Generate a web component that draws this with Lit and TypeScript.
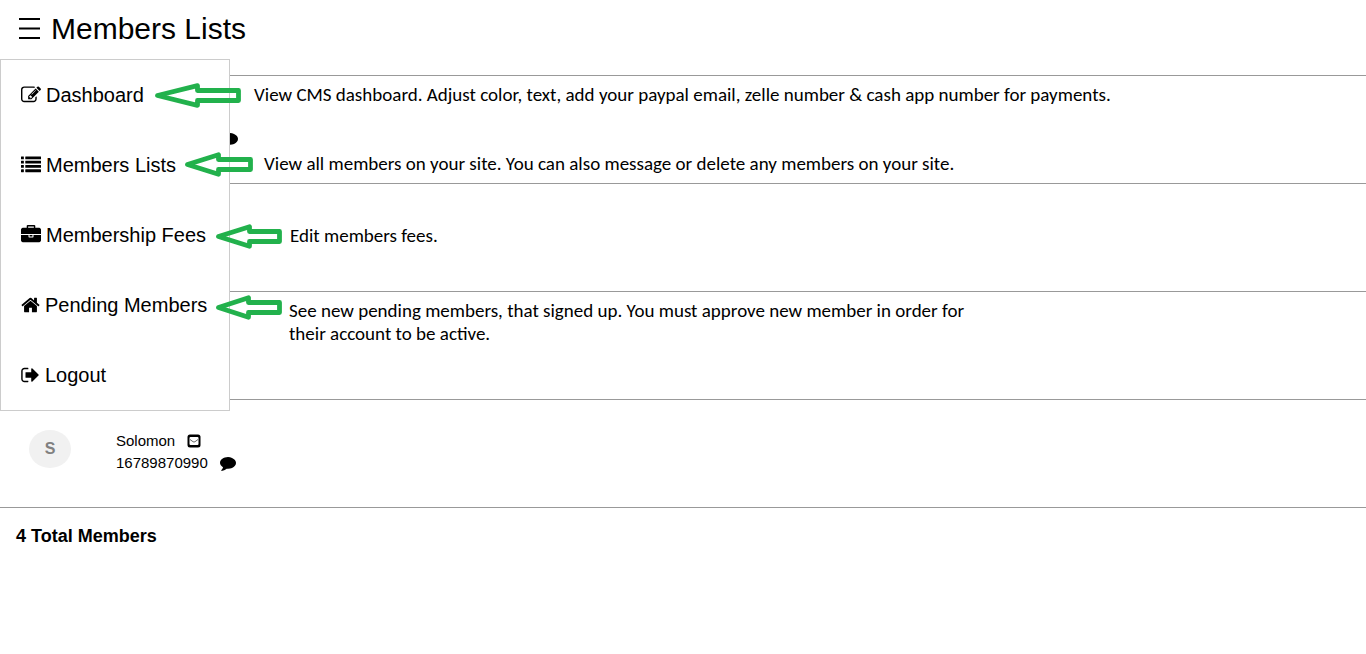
import { LitElement, html, css, svg, nothing } from "lit";
import { customElement, property } from "lit/decorators.js";

const listRows = [128, 512, 896, 1280];

const icons = {
  edit: {
    box: "0 0 1792 1792",
    width: 20,
    art: svg`<path d="M888 1184l116-116-152-152-116 116v56h96v96h56zm440-720q-16-16-33 1l-350 350q-17 17-1 33t33-1l350-350q17-17 1-33zm80 594v190q0 119-84.5 203.5t-203.5 84.5h-832q-119 0-203.5-84.5t-84.5-203.5v-832q0-119 84.5-203.5t203.5-84.5h832q63 0 117 25 15 7 18 23 3 17-9 29l-49 49q-14 14-32 8-23-6-45-6h-832q-66 0-113 47t-47 113v832q0 66 47 113t113 47h832q66 0 113-47t47-113v-126q0-13 9-22l64-64q15-15 35-7t20 29zm-96-738l288 288-672 672h-288v-288zm444 132l-92 92-288-288 92-92q28-28 68-28t68 28l152 152q28 28 28 68t-28 68z"/>`,
  },
  list: {
    box: "0 0 1792 1792",
    width: 20,
    art: listRows.map(
      (y) => svg`<rect x="0" y=${y} width="256" height="256" rx="32"/><rect x="384" y=${y} width="1408" height="256" rx="32"/>`
    ),
  },
  briefcase: {
    box: "0 0 1792 1792",
    width: 20,
    art: svg`<path d="M640 256h512v-128h-512v128zm1152 640v480q0 66-47 113t-113 47h-1472q-66 0-113-47t-47-113v-480h672v160q0 26 19 45t45 19h320q26 0 45-19t19-45v-160h672zm-768 0v128h-256v-128h256zm768-480v384h-1792v-384q0-66 47-113t113-47h352v-160q0-40 28-68t68-28h576q40 0 68 28t28 68v160h352q66 0 113 47t47 113z"/>`,
  },
  home: {
    box: "64 0 1664 1792",
    width: 19,
    art: svg`<path d="M1472 992v480q0 26-19 45t-45 19h-384v-384h-256v384h-384q-26 0-45-19t-19-45v-480q0-1 .5-3t.5-3l575-474 575 474q1 2 1 6zm223-69l-62 74q-8 9-21 11h-3q-13 0-21-7l-692-577-692 577q-12 8-24 7-13-2-21-11l-62-74q-8-10-7-23.5t11-21.5l719-599q32-26 76-26t76 26l244 204v-195q0-14 9-23t23-9h192q14 0 23 9t9 23v408l219 182q10 8 11 21.5t-7 23.5z"/>`,
  },
  logout: {
    box: "64 0 1664 1792",
    width: 19,
    art: svg`<path d="M704 1440q0 4 1 20t.5 26.5-3 23.5-10 19.5-20.5 6.5h-320q-119 0-203.5-84.5t-84.5-203.5v-704q0-119 84.5-203.5t203.5-84.5h320q13 0 22.5 9.5t9.5 22.5q0 4 1 20t.5 26.5-3 23.5-10 19.5-20.5 6.5h-320q-66 0-113 47t-47 113v704q0 66 47 113t113 47h312l11.5 1 11.5 3 8 5.5 7 9 2 13.5zm928-544q0 26-19 45l-544 544q-19 19-45 19t-45-19-19-45v-288h-448q-26 0-45-19t-19-45v-384q0-26 19-45t45-19h448v-288q0-26 19-45t45-19 45 19l544 544q19 19 19 45z"/>`,
  },
};

type IconName = keyof typeof icons;

const menu: { label: string; icon: IconName }[] = [
  { label: "Dashboard", icon: "edit" },
  { label: "Members Lists", icon: "list" },
  { label: "Membership Fees", icon: "briefcase" },
  { label: "Pending Members", icon: "home" },
  { label: "Logout", icon: "logout" },
];

const callouts = [
  { spot: "dashboard", width: 86, head: 45, text: "View CMS dashboard. Adjust color, text, add your paypal email, zelle number & cash app number for payments." },
  { spot: "members", width: 68, head: 36, text: "View all members on your site. You can also message or delete any members on your site." },
  { spot: "fees", width: 66, head: 36, text: "Edit members fees." },
  { spot: "pending", width: 66, head: 35, text: "See new pending members, that signed up. You must approve new member in order for their account to be active." },
];

interface Member {
  name?: string;
  phone?: string;
  chat?: boolean;
}

const members: Member[] = [
  { chat: true },
  {},
  {},
  { name: "Solomon", phone: "16789870990", chat: true },
];

@customElement("member-row")
export class MemberRow extends LitElement {
  @property({ attribute: false }) member: Member = {};

  static styles = css`
    :host {
      display: block;
      box-sizing: border-box;
      min-height: 108px;
      padding: 30px 29px 0;
      border-top: 1px solid #999;
    }
    .row { display: flex; gap: 45px; }
    .avatar {
      width: 42px;
      height: 38px;
      border-radius: 50%;
      background: #f1f1f1;
      color: #808080;
      font-size: 16px;
      font-weight: bold;
      line-height: 38px;
      text-align: center;
    }
    .blank { visibility: hidden; }
    .line {
      display: flex;
      align-items: center;
      gap: 12px;
      height: 22px;
      font-size: 15px;
      line-height: 20px;
    }
    .phone { min-width: 92px; }
    .blank-phone { min-width: 94px; }
    a { display: flex; color: #000; }
  `;

  render() {
    const { name, phone, chat } = this.member;
    return html`<div class="row">
      <div class="avatar ${name ? "" : "blank"}">${name ? name[0] : nothing}</div>
      <div>
        <div class="line">
          ${name
            ? html`<span>${name}</span>
                <a href="#email" aria-label="Email">
                  <svg width="14" height="14" viewBox="0 0 14 14">
                    <rect x="0.5" y="0.5" width="13" height="13" rx="2.5" />
                    <rect x="2.5" y="3" width="9" height="8" rx="1" fill="#fff" />
                    <path d="M3 5.5L6 7.7Q7 8.4 8 7.7L11 5.5" fill="none" stroke="#555" stroke-width="0.9" />
                  </svg>
                </a>`
            : nothing}
        </div>
        <div class="line">
          <span class=${phone ? "phone" : "blank-phone"}>${phone ?? nothing}</span>
          ${chat
            ? html`<a href="#message" aria-label="Message">
                <svg width="16" height="16" viewBox="0 0 1792 1792">
                  <path d="M1792 896q0 174-120 321.5t-326 233-450 85.5q-70 0-145-8-198 175-460 223-49 14-114 22-17 2-30.5-9t-17.5-29v-1q-3-4-.5-12t2-10 4.5-9.5l6-9 7-8.5 8-9q7-8 31-34.5t34.5-38 31-39.5 32.5-51 27-59 26-76q-157-89-247.5-220t-90.5-281q0-130 71-248.5t191-204.5 286-136.5 348-50.5q244 0 450 85.5t326 233 120 321.5z" />
                </svg>
              </a>`
            : nothing}
        </div>
      </div>
    </div>`;
  }
}

@customElement("app-root")
export class AppRoot extends LitElement {
  static styles = css`
    :host {
      display: block;
      position: relative;
      min-height: 100vh;
      background: #fff;
      color: #000;
      font-family: "Liberation Sans", Arial, sans-serif;
    }
    header {
      display: flex;
      align-items: center;
      gap: 9px;
      padding: 12px 18px 29px;
    }
    h1 { margin: 0; font-size: 30px; font-weight: normal; line-height: 34px; }
    .toggle { display: flex; padding: 0; border: 0; background: none; }
    nav {
      position: absolute;
      top: 59px;
      left: 0;
      box-sizing: border-box;
      width: 230px;
      border: 1px solid #ccc;
      background: #fff;
    }
    .item {
      display: flex;
      align-items: center;
      gap: 5px;
      height: 70px;
      padding-left: 20px;
      color: #000;
      font-size: 20px;
      text-decoration: none;
    }
    .total {
      margin: 0;
      padding: 17px 16px;
      border-top: 1px solid #999;
      font-size: 18px;
      font-weight: bold;
      line-height: 22px;
    }
    .callout {
      position: absolute;
      display: flex;
      align-items: flex-start;
      font-family: Carlito, Calibri, Lato, sans-serif;
      font-size: 19px;
      line-height: 23px;
    }
    .callout svg { flex: none; }
    .callout p { margin: 0; }
    .dashboard { left: 155px; top: 83px; gap: 13px; }
    .members { left: 185px; top: 152px; gap: 11px; }
    .fees { left: 216px; top: 224px; gap: 8px; }
    .pending { left: 216px; top: 295px; gap: 7px; }
    .pending p { max-width: 690px; padding-top: 4px; }
  `;

  render() {
    return html`
      <header>
        <button class="toggle" aria-label="Menu">
          <svg width="24" height="24" viewBox="0 0 24 24">
            <path d="M1 2h21M1 11.5h21M1 21h21" stroke="#000" stroke-width="2" />
          </svg>
        </button>
        <h1>Members Lists</h1>
      </header>
      <main>
        ${members.map((m) => html`<member-row .member=${m}></member-row>`)}
        <p class="total">4 Total Members</p>
      </main>
      <nav>
        ${menu.map(({ label, icon }) => {
          const { box, width, art } = icons[icon];
          return html`<a class="item" href="#">
            <svg width=${width} height="20" viewBox=${box} aria-hidden="true">${art}</svg>
            <span>${label}</span>
          </a>`;
        })}
      </nav>
      ${callouts.map(
        ({ spot, width: w, head: h, text }) => html`<div class="callout ${spot}">
          <svg width=${w} height="25" viewBox="0 0 ${w} 25" aria-hidden="true">
            <path
              d="M2.5 12.5L${h - 2.5} 2.7V7.5H${w - 2.5}V17.5H${h - 2.5}V22.3Z"
              fill="none"
              stroke="#22b14c"
              stroke-width="4.8"
              stroke-linejoin="round"
            />
          </svg>
          <p>${text}</p>
        </div>`
      )}
    `;
  }
}
